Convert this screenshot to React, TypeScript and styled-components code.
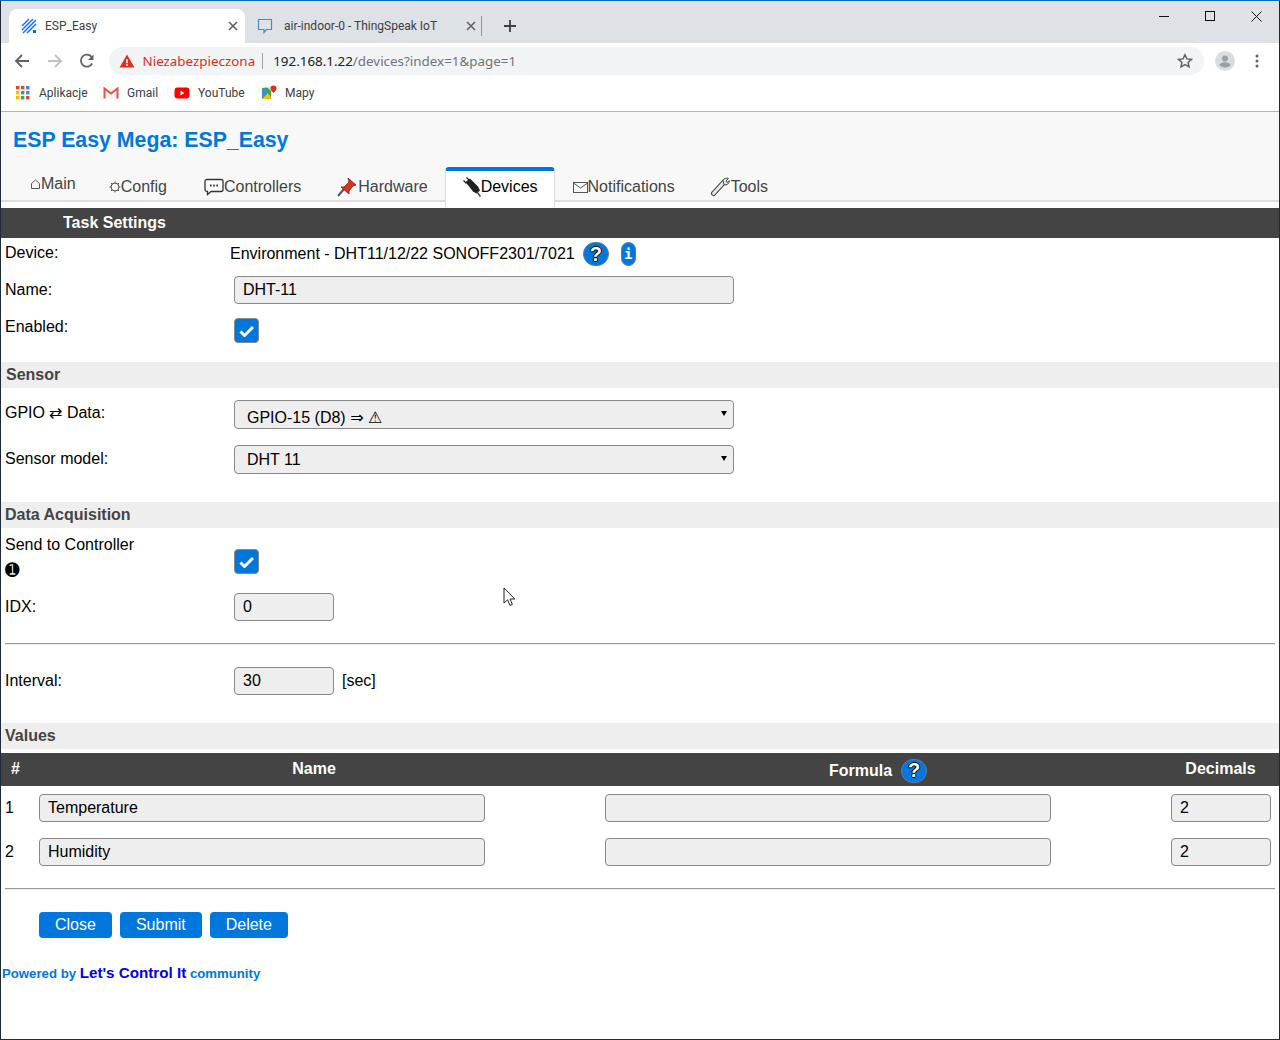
import { ReactNode } from "react";
import styled, { createGlobalStyle } from "styled-components";

const GlobalStyle = createGlobalStyle`
  html, body {
    margin: 0;
    padding: 0;
    background: #fff;
  }
  * {
    box-sizing: border-box;
  }
`;

const Frame = styled.div`
  width: 1280px;
  height: 1040px;
  display: flex;
  flex-direction: column;
  overflow: hidden;
  border: 1px solid #1f2b3a;
  border-top-color: #0b6cbd;
  font-family: "Liberation Sans", Arial, sans-serif;
  font-size: 16px;
  color: #000;
`;

/* browser chrome */
const TabStrip = styled.div`
  height: 42px;
  flex: none;
  display: flex;
  align-items: flex-end;
  padding-left: 8px;
  background: #dee1e6;
  position: relative;
`;
const BrowserTab = styled.div<{ $active?: boolean }>`
  width: 236px;
  height: 34px;
  display: flex;
  align-items: center;
  gap: ${(p) => (p.$active ? "8px" : "11px")};
  padding: 0 ${(p) => (p.$active ? "7px" : "5px")} 0 12px;
  border-radius: 8px 8px 0 0;
  background: ${(p) => (p.$active ? "#fff" : "transparent")};
  font-family: Roboto, "Noto Sans", sans-serif;
  font-size: 12px;
  color: #3c4043;
`;
const TabTitle = styled.span`
  flex: 1;
  white-space: nowrap;
`;
const TabDivider = styled.div`
  width: 1px;
  height: 20px;
  margin: 0 0 7px 0;
  background: #8e9196;
`;
const PlusSlot = styled.div`
  height: 34px;
  width: 56px;
  display: flex;
  align-items: center;
  justify-content: center;
`;
const WindowControls = styled.div`
  margin-left: auto;
  align-self: flex-start;
  display: flex;
`;
const WindowButton = styled.div`
  width: 46px;
  height: 30px;
  display: flex;
  align-items: center;
  justify-content: center;
`;
const Toolbar = styled.div`
  height: 35px;
  flex: none;
  display: flex;
  align-items: center;
  background: #fff;
  padding: 0 0 0 13px;
`;
const NavIcon = styled.div`
  width: 32.5px;
  display: flex;
`;
const Omnibox = styled.div`
  width: 1095px;
  height: 28px;
  margin-left: -3px;
  display: flex;
  align-items: center;
  border-radius: 14px;
  padding: 0 11px 0 10px;
  background: #f1f3f4;
  font-family: "Noto Sans", sans-serif;
  font-size: 13.4px;
  white-space: nowrap;
`;
const Unsafe = styled.span`
  margin-left: 8px;
  color: #d93025;
`;
const OmniDivider = styled.span`
  width: 1px;
  height: 16px;
  margin: 0 10px 0 7px;
  background: #9aa0a6;
`;
const Host = styled.span`
  color: #202124;
`;
const UrlPath = styled.span`
  flex: 1;
  color: #70757a;
`;
const Avatar = styled.div`
  margin-left: 11px;
  width: 20px;
  height: 20px;
  display: flex;
`;
const MenuDots = styled.div`
  margin-left: 20px;
  display: flex;
`;
const Bookmarks = styled.div`
  height: 34px;
  flex: none;
  display: flex;
  align-items: center;
  padding: 0 0 4px 14px;
  background: #fff;
  border-bottom: 1px solid #b4b4b4;
  font-family: Roboto, "Noto Sans", sans-serif;
  font-size: 12px;
  color: #3c4043;
`;
const Bookmark = styled.div<{ $width: number }>`
  width: ${(p) => p.$width}px;
  display: flex;
  align-items: center;
  gap: 8px;
`;

/* page header */
const PageHeader = styled.header`
  height: 90px;
  flex: none;
  display: flex;
  flex-direction: column;
  background: #f8f8f8;
  border-bottom: 2px solid #ddd;
`;
const PageTitle = styled.h1`
  margin: 0;
  height: 55px;
  flex: none;
  padding: 15px 0 0 12px;
  font-size: 21.3px;
  line-height: 26px;
  font-weight: bold;
  color: #07d;
`;
const NavTabs = styled.nav`
  display: flex;
  flex: none;
  padding-left: 11px;
  height: 40px;
`;
const NavTab = styled.a<{ $active?: boolean; $raise?: boolean; $right?: number }>`
  height: ${(p) => (p.$active ? "40px" : "34px")};
  margin-top: ${(p) => (p.$active ? "0" : "6px")};
  display: flex;
  align-items: center;
  padding: ${(p) =>
    p.$active
      ? "0 16px 4px 17px"
      : `0 ${p.$right ?? 17}px ${p.$raise ? 12 : 6}px 18px`};
  color: ${(p) => (p.$active ? "#000" : "#444")};
  background: ${(p) => (p.$active ? "#fff" : "transparent")};
  border: ${(p) => (p.$active ? "1px solid #ddd" : "none")};
  border-top: ${(p) => (p.$active ? "4px solid #07d" : "none")};
  border-bottom: none;
  border-radius: ${(p) => (p.$active ? "4px 4px 0 0" : "0")};
  white-space: nowrap;
`;
const GlyphSlot = styled.span<{ $width: number }>`
  width: ${(p) => p.$width}px;
  flex: none;
  display: flex;
`;
const Spacer = styled.div`
  height: 6px;
  flex: none;
`;
const TitleBand = styled.div`
  height: 30px;
  flex: none;
  display: flex;
  align-items: center;
  padding-left: 62px;
  background: #444;
  color: #fff;
  font-weight: bold;
`;

/* form rows */
const Row = styled.div<{ $height: number; $top: number; $labelTop: number }>`
  height: ${(p) => p.$height}px;
  flex: none;
  display: grid;
  grid-template-columns: 229px 1fr;
  align-items: start;
  padding-left: 4px;
  > :first-child {
    margin-top: ${(p) => p.$labelTop}px;
  }
  > :last-child {
    margin-top: ${(p) => p.$top}px;
  }
`;
const Label = styled.div`
  line-height: 18px;
`;
const Field = styled.div`
  display: flex;
  align-items: center;
`;
const DeviceValue = styled.div`
  display: flex;
  align-items: center;
  height: 24px;
  margin-left: -4px;
`;
const TextBox = styled.input<{ $width: number }>`
  width: ${(p) => p.$width}px;
  height: 28px;
  flex: none;
  padding: 0 8px;
  border: 1px solid #888;
  border-radius: 4px;
  background: #eee;
  font: 16px "Liberation Sans", Arial, sans-serif;
  color: #000;
  outline: none;
`;
const DropdownWrap = styled.div`
  position: relative;
  width: 500px;
  height: 29px;
  &::after {
    content: "";
    position: absolute;
    right: 7px;
    top: 11px;
    border-style: solid;
    border-width: 5px 3.5px 0;
    border-color: #000 transparent transparent;
  }
`;
const Dropdown = styled.select<{ $low?: boolean }>`
  appearance: none;
  width: 100%;
  height: 100%;
  padding: ${(p) => (p.$low ? "5px" : "0")} 8px 0 12px;
  border: 1px solid #888;
  border-radius: 4px;
  background-color: #eee;
  font: 16px "Liberation Sans", "DejaVu Sans", sans-serif;
  color: #000;
  outline: none;
`;
const Check = styled.div`
  width: 25px;
  height: 25px;
  display: flex;
  align-items: center;
  justify-content: center;
  border: 1px solid #888;
  border-radius: 4px;
  background: #07d;
`;
const Unit = styled.span`
  margin-left: 8px;
`;
const Band = styled.div<{ $inset?: number }>`
  height: 26px;
  flex: none;
  display: flex;
  align-items: center;
  padding-left: ${(p) => p.$inset ?? 4}px;
  background: #eee;
  color: #444;
  font-weight: bold;
`;
const Note = styled.div`
  margin-top: 7px;
  font-family: "DejaVu Sans", sans-serif;
  font-size: 17.5px;
  line-height: 18px;
`;
const Rule = styled.hr<{ $before: number; $after: number }>`
  flex: none;
  height: 2px;
  width: 1270px;
  margin: ${(p) => p.$before}px 0 ${(p) => p.$after}px 4px;
  border: none;
  border-top: 1px solid #999;
  border-bottom: 1px solid #eee;
`;
const HelpBadge = styled.span<{ $gap?: number }>`
  width: 26px;
  height: 24px;
  flex: none;
  margin-left: ${(p) => p.$gap ?? 0}px;
  display: inline-flex;
  align-items: center;
  justify-content: center;
  border: 1px solid #5d7f9f;
  border-radius: 12px;
  background: #07d;
  color: #fff;
  font-weight: bold;
  font-size: 20px;
  text-shadow:
    1px 0 0 #000,
    -1px 0 0 #000,
    0 1px 0 #000,
    0 -1px 0 #000;
`;
const InfoBadge = styled.span`
  width: 15px;
  height: 24px;
  flex: none;
  margin-left: 12px;
  display: inline-flex;
  align-items: center;
  justify-content: center;
  border: 1px solid #5d7f9f;
  border-radius: 8px;
  background: #07d;
  color: #fff;
  font: bold 14px "DejaVu Sans Mono", monospace;
`;

/* values table */
const TableGrid = styled.div`
  display: grid;
  grid-template-columns: 33px 560px 568px 1fr;
`;
const TableHead = styled(TableGrid)`
  height: 33px;
  flex: none;
  margin-top: 4px;
  background: #444;
  color: #fff;
  font-weight: bold;
  align-items: center;
`;
const HeadCell = styled.div<{ $lower?: boolean; $left?: boolean }>`
  display: flex;
  align-items: center;
  justify-content: ${(p) => (p.$left ? "flex-start" : "center")};
  gap: 9px;
  padding-top: ${(p) => (p.$lower ? "2px" : "0")};
  padding-bottom: ${(p) => (p.$lower ? "0" : "1px")};
  padding-left: ${(p) => (p.$left ? "10px" : "0")};
`;
const TableRow = styled(TableGrid)`
  height: 44px;
  flex: none;
  padding-top: 8px;
`;
const IndexCell = styled.div`
  padding: 5px 0 0 4px;
`;
const InputCell = styled.div<{ $inset: number }>`
  padding-left: ${(p) => p.$inset}px;
`;

/* footer */
const Actions = styled.div`
  display: flex;
  gap: 8px;
  padding-left: 38px;
  flex: none;
`;
const ActionButton = styled.button`
  height: 26px;
  padding: 0 16px;
  border: none;
  border-radius: 4px;
  background: #07d;
  color: #fff;
  font: 16px "Liberation Sans", Arial, sans-serif;
`;
const Powered = styled.div`
  margin-top: 27px;
  padding-left: 1px;
  font-size: 13.2px;
  font-weight: bold;
  line-height: 16px;
  color: #07d;
`;
const CommunityLink = styled.a`
  color: #00e;
  font-size: 15.2px;
`;

const CloseGlyph = () => (
  <svg width="10" height="10" viewBox="0 0 10 10">
    <path d="M1 1l8 8M9 1l-8 8" stroke="#5f6368" strokeWidth="1.6" />
  </svg>
);

const EspFavicon = () => (
  <svg width="16" height="16" viewBox="0 0 16 16">
    <path
      d="M1 8L8 1M1 12L12 1M2 15L15 2M6 15L15 6"
      stroke="#1a73e8"
      strokeWidth="1.5"
    />
    <rect x="12" y="12" width="3" height="3" fill="#1a5fc8" />
  </svg>
);

const BubbleFavicon = () => (
  <svg width="16" height="16" viewBox="0 0 16 16">
    <path
      d="M1.5 1.5h13v10h-5l-2.5 3v-3h-5.5z"
      fill="none"
      stroke="#4a8bc2"
      strokeWidth="1.2"
    />
  </svg>
);

const AppsIcon = () => {
  const colors = ["#ea4335", "#ea4335", "#4285f4", "#fbbc05", "#34a853", "#4285f4", "#fbbc05", "#34a853", "#ea4335"];
  return (
    <svg width="16" height="16" viewBox="0 0 16 16">
      {colors.map((c, i) => (
        <rect key={i} x={1 + (i % 3) * 5} y={1 + Math.floor(i / 3) * 5} width="3.4" height="3.4" fill={c} />
      ))}
    </svg>
  );
};

const GmailIcon = () => (
  <svg width="16" height="16" viewBox="0 0 16 16">
    <path d="M1 3.5h14v10h-14z" fill="#f2f2f2" />
    <path d="M1.5 13.5V3.5L8 8.5l6.5-5v10" fill="none" stroke="#d9584b" strokeWidth="2" />
  </svg>
);

const YoutubeIcon = () => (
  <svg width="16" height="16" viewBox="0 0 16 16">
    <rect x="0.5" y="2.5" width="15" height="11" rx="3" fill="#f00" />
    <path d="M6.5 5.5l4 2.5-4 2.5z" fill="#fff" />
  </svg>
);

const MapsIcon = () => (
  <svg width="16" height="16" viewBox="0 0 16 16">
    <path d="M1 3l9-1v12H1z" fill="#35a853" />
    <path d="M1 14l6-6 4 6z" fill="#fbbc05" />
    <path d="M1 3l5 5-5 5z" fill="#4285f4" />
    <path d="M6 2h5v5z" fill="#e8eaed" />
    <path d="M12.5 0.5a3 3 0 0 1 3 3c0 2-3 4.5-3 4.5s-3-2.5-3-4.5a3 3 0 0 1 3-3z" fill="#d93025" />
  </svg>
);

const HomeGlyph = () => (
  <svg width="11" height="10" viewBox="0 0 11 10">
    <path d="M1.5 9.5v-5l4-3.5 4 3.5v5z" fill="none" stroke="#555" />
  </svg>
);

const GearGlyph = () => (
  <svg width="12" height="12" viewBox="0 0 12 12">
    <circle cx="6" cy="6" r="4" fill="none" stroke="#555" />
    <path d="M6 0.5v2M6 9.5v2M0.5 6h2M9.5 6h2M2 2l1.4 1.4M8.6 8.6L10 10M10 2L8.6 3.4M3.4 8.6L2 10" stroke="#555" />
  </svg>
);

const ChatGlyph = () => (
  <svg width="20" height="18" viewBox="0 0 20 18">
    <path d="M3 1.5h14a2 2 0 0 1 2 2v8a2 2 0 0 1-2 2H7l-3.5 3v-3H3a2 2 0 0 1-2-2v-8a2 2 0 0 1 2-2z" fill="#fff" stroke="#333" strokeWidth="1.3" />
    <path d="M6 7.5h1.6M9.2 7.5h1.6M12.4 7.5h1.6" stroke="#333" strokeWidth="1.8" />
  </svg>
);

const PinGlyph = () => (
  <svg width="20" height="20" viewBox="0 0 20 20">
    <path d="M1 19l6-7" stroke="#555" strokeWidth="2" />
    <path d="M11 1l8 7-3 1-4 5 0 3-8-7 3 0 5-5z" fill="#e0301e" stroke="#7a1a10" strokeWidth="0.8" />
  </svg>
);

const PlugGlyph = () => (
  <svg width="18" height="20" viewBox="0 0 18 20">
    <path d="M2.5 5L7 1.5l8 8 2 4-3.500 3-3.500-2z" fill="#222" />
    <path d="M0.500 3.500l3 3M3.500 0.500l3 3" stroke="#222" strokeWidth="1.2" />
    <path d="M14 15l3.500 4.500" stroke="#444" strokeWidth="1.5" />
  </svg>
);

const MailGlyph = () => (
  <svg width="15" height="11" viewBox="0 0 15 11">
    <rect x="0.5" y="0.5" width="14" height="10" fill="none" stroke="#555" />
    <path d="M0.5 1l7 5 7-5" fill="none" stroke="#555" />
  </svg>
);

const WrenchGlyph = () => (
  <svg width="20" height="20" viewBox="0 0 20 20">
    <path d="M3.500 16.500L14 5" stroke="#444" strokeWidth="5" strokeLinecap="round" />
    <path d="M3.500 16.500L14 5" stroke="#e8e8e8" strokeWidth="3" strokeLinecap="round" />
    <path d="M13 3.500a4 4 0 0 1 5.500-2l-2.500 2.500 1 1.500 2.300-1.800a4 4 0 0 1-5.300 4z" fill="#e8e8e8" stroke="#444" />
  </svg>
);

const CheckMark = () => (
  <svg width="15" height="12" viewBox="0 0 15 12">
    <path d="M1.5 6.500l4 4L14 2" fill="none" stroke="#fff" strokeWidth="3" />
  </svg>
);

const MouseCursor = styled.svg`
  position: absolute;
  left: 503px;
  top: 587px;
`;

interface FormRowProps {
  label: ReactNode;
  height: number;
  top: number;
  labelTop: number;
  children: ReactNode;
}

const FormRow = ({ label, height, top, labelTop, children }: FormRowProps) => (
  <Row $height={height} $top={top} $labelTop={labelTop}>
    <Label>{label}</Label>
    <Field>{children}</Field>
  </Row>
);

const valueRows = [
  { id: 1, name: "Temperature" },
  { id: 2, name: "Humidity" },
];

const App = () => {
  return (
    <Frame>
      <GlobalStyle />
      <TabStrip>
        <BrowserTab $active>
          <EspFavicon />
          <TabTitle>ESP_Easy</TabTitle>
          <CloseGlyph />
        </BrowserTab>
        <BrowserTab>
          <BubbleFavicon />
          <TabTitle>air-indoor-0 - ThingSpeak IoT</TabTitle>
          <CloseGlyph />
        </BrowserTab>
        <TabDivider />
        <PlusSlot>
          <svg width="12" height="12" viewBox="0 0 12 12">
            <path d="M6 0v12M0 6h12" stroke="#3c4043" strokeWidth="1.8" />
          </svg>
        </PlusSlot>
        <WindowControls>
          <WindowButton>
            <svg width="10" height="10" viewBox="0 0 10 10">
              <path d="M0 5.500h10" stroke="#111" />
            </svg>
          </WindowButton>
          <WindowButton>
            <svg width="10" height="10" viewBox="0 0 10 10">
              <rect x="0.5" y="0.5" width="9" height="9" fill="none" stroke="#111" />
            </svg>
          </WindowButton>
          <WindowButton>
            <svg width="11" height="11" viewBox="0 0 11 11">
              <path d="M0.5 0.5l10 10M10.500 0.5l-10 10" stroke="#111" />
            </svg>
          </WindowButton>
        </WindowControls>
      </TabStrip>

      <Toolbar>
        <NavIcon>
          <svg width="16" height="16" viewBox="0 0 16 16">
            <path d="M15 8H2M8 2L2 8l6 6" fill="none" stroke="#5f6368" strokeWidth="1.8" />
          </svg>
        </NavIcon>
        <NavIcon>
          <svg width="16" height="16" viewBox="0 0 16 16">
            <path d="M1 8h13M8 2l6 6-6 6" fill="none" stroke="#bdc1c6" strokeWidth="1.8" />
          </svg>
        </NavIcon>
        <NavIcon>
          <svg width="16" height="16" viewBox="0 0 16 16">
            <path d="M13.200 10.500A6 6 0 1 1 12.800 4.200" fill="none" stroke="#5f6368" strokeWidth="1.8" />
            <path d="M14.500 1.500v5.500H9z" fill="#5f6368" />
          </svg>
        </NavIcon>
        <Omnibox>
          <svg width="16" height="14" viewBox="0 0 16 14">
            <path d="M8 0.5L15.500 13.500H0.5z" fill="#d93025" />
            <path d="M8 5v4.200M8 10.300v1.600" stroke="#fff" strokeWidth="1.5" />
          </svg>
          <Unsafe>Niezabezpieczona</Unsafe>
          <OmniDivider />
          <Host>192.168.1.22</Host>
          <UrlPath>/devices?index=1&amp;page=1</UrlPath>
          <svg width="16" height="16" viewBox="0 0 16 16">
            <path
              d="M8 1.800l1.900 4.100 4.500.5-3.300 3 .9 4.500L8 11.600l-4 2.300.9-4.500-3.300-3 4.500-.5z"
              fill="none"
              stroke="#5f6368"
              strokeWidth="1.5"
            />
          </svg>
        </Omnibox>
        <Avatar>
          <svg width="20" height="20" viewBox="0 0 20 20">
            <circle cx="10" cy="10" r="10" fill="#dadce0" />
            <circle cx="10" cy="7.5" r="3" fill="#9aa0a6" />
            <path d="M4.500 14.500c0-2.200 3-3.300 5.500-3.300s5.500 1.100 5.500 3.300c-1.300 1.200-3.300 2-5.500 2s-4.200-.8-5.500-2z" fill="#9aa0a6" />
          </svg>
        </Avatar>
        <MenuDots>
          <svg width="4" height="14" viewBox="0 0 4 14">
            <circle cx="2" cy="2" r="1.5" fill="#5f6368" />
            <circle cx="2" cy="7" r="1.5" fill="#5f6368" />
            <circle cx="2" cy="12" r="1.5" fill="#5f6368" />
          </svg>
        </MenuDots>
      </Toolbar>

      <Bookmarks>
        <Bookmark $width={88}>
          <AppsIcon />
          Aplikacje
        </Bookmark>
        <Bookmark $width={71}>
          <GmailIcon />
          Gmail
        </Bookmark>
        <Bookmark $width={87}>
          <YoutubeIcon />
          YouTube
        </Bookmark>
        <Bookmark $width={70}>
          <MapsIcon />
          Mapy
        </Bookmark>
      </Bookmarks>

      <PageHeader>
        <PageTitle>ESP Easy Mega: ESP_Easy</PageTitle>
        <NavTabs>
          <NavTab $raise $right={15}>
            <HomeGlyph />
            Main
          </NavTab>
          <NavTab $right={19}>
            <GearGlyph />
            Config
          </NavTab>
          <NavTab $right={18}>
            <ChatGlyph />
            Controllers
          </NavTab>
          <NavTab>
            <GlyphSlot $width={21}>
              <PinGlyph />
            </GlyphSlot>
            Hardware
          </NavTab>
          <NavTab $active>
            <GlyphSlot $width={18}>
              <PlugGlyph />
            </GlyphSlot>
            Devices
          </NavTab>
          <NavTab>
            <MailGlyph />
            Notifications
          </NavTab>
          <NavTab>
            <GlyphSlot $width={21}>
              <WrenchGlyph />
            </GlyphSlot>
            Tools
          </NavTab>
        </NavTabs>
      </PageHeader>
      <Spacer />
      <TitleBand>Task Settings</TitleBand>

      <FormRow label="Device:" height={32} top={4} labelTop={6}>
        <DeviceValue>
          Environment - DHT11/12/22 SONOFF2301/7021
          <HelpBadge $gap={8}>?</HelpBadge>
          <InfoBadge>i</InfoBadge>
        </DeviceValue>
      </FormRow>
      <FormRow label="Name:" height={40} top={6} labelTop={11}>
        <TextBox $width={500} readOnly value="DHT-11" />
      </FormRow>
      <FormRow label="Enabled:" height={52} top={8} labelTop={8}>
        <Check>
          <CheckMark />
        </Check>
      </FormRow>

      <Band $inset={5}>Sensor</Band>
      <FormRow label="GPIO ⇄ Data:" height={49} top={12} labelTop={16}>
        <DropdownWrap>
          <Dropdown $low defaultValue="15">
            <option value="15">GPIO-15 (D8) ⇒ ⚠</option>
          </Dropdown>
        </DropdownWrap>
      </FormRow>
      <FormRow label="Sensor model:" height={65} top={8} labelTop={13}>
        <DropdownWrap>
          <Dropdown defaultValue="11">
            <option value="11">DHT 11</option>
          </Dropdown>
        </DropdownWrap>
      </FormRow>

      <Band>Data Acquisition</Band>
      <FormRow
        label={
          <>
            Send to Controller
            <Note>➊</Note>
          </>
        }
        height={55}
        top={21}
        labelTop={8}
      >
        <Check>
          <CheckMark />
        </Check>
      </FormRow>
      <FormRow label="IDX:" height={48} top={10} labelTop={15}>
        <TextBox $width={100} readOnly value="0" />
      </FormRow>
      <Rule $before={12} $after={0} />
      <FormRow label="Interval:" height={78} top={22} labelTop={27}>
        <TextBox $width={100} readOnly value="30" />
        <Unit>[sec]</Unit>
      </FormRow>

      <Band>Values</Band>
      <TableHead>
        <HeadCell $left>#</HeadCell>
        <HeadCell>Name</HeadCell>
        <HeadCell $lower>
          Formula
          <HelpBadge>?</HelpBadge>
        </HeadCell>
        <HeadCell>Decimals</HeadCell>
      </TableHead>
      {valueRows.map((row) => (
        <TableRow key={row.id}>
          <IndexCell>{row.id}</IndexCell>
          <InputCell $inset={5}>
            <TextBox $width={446} readOnly value={row.name} />
          </InputCell>
          <InputCell $inset={11}>
            <TextBox $width={446} readOnly value="" />
          </InputCell>
          <InputCell $inset={9}>
            <TextBox $width={100} readOnly value="2" />
          </InputCell>
        </TableRow>
      ))}
      <Rule $before={14} $after={22} />
      <Actions>
        <ActionButton>Close</ActionButton>
        <ActionButton>Submit</ActionButton>
        <ActionButton>Delete</ActionButton>
      </Actions>
      <Powered>
        Powered by <CommunityLink>Let's Control It</CommunityLink> community
      </Powered>

      <MouseCursor width="13" height="21" viewBox="0 0 13 21">
        <path d="M1 1v15l3.600-3.200 2.400 5.600 2.400-1-2.400-5.400h4.800z" fill="#fff" stroke="#222" />
      </MouseCursor>
    </Frame>
  );
};

export default App;
